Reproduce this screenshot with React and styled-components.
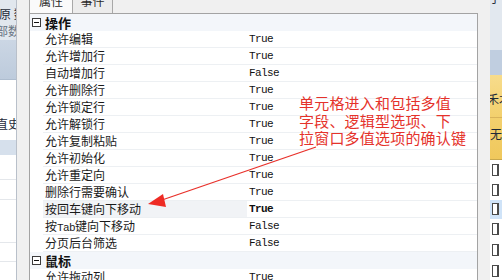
import React from "react";
import styled, { createGlobalStyle } from "styled-components";

const GlobalStyle = createGlobalStyle`
  html, body {
    margin: 0;
    padding: 0;
  }
  body {
    width: 502px;
    height: 280px;
    overflow: hidden;
    background: #f0f0f0;
    font-family: "Noto Sans CJK SC", sans-serif;
  }
`;

const Screen = styled.div`
  display: flex;
  width: 502px;
  height: 280px;
  overflow: hidden;
`;

/* ---------- application behind the dialog ---------- */

const BackApp = styled.div`
  width: ${p => p.$w}px;
  flex: none;
  display: flex;
  flex-direction: column;
  overflow: hidden;
  background: #fff;
`;

const Band = styled.div`
  flex: none;
  height: ${p => p.$h}px;
  background: ${p => p.$bg || "#fff"};
  border-bottom: 1px solid ${p => p.$line || "transparent"};
  box-sizing: border-box;
  display: flex;
  flex-direction: column;
  justify-content: ${p => p.$justify || "flex-start"};
  overflow: hidden;
`;

const BackText = styled.div`
  flex: none;
  white-space: nowrap;
  font-size: 12px;
  line-height: 17px;
  height: 17px;
  color: ${p => p.$color || "#1e2a38"};
  margin-left: ${p => p.$shift || 0}px;
`;

const BackRow = styled.div`
  flex: none;
  height: ${p => p.$h || 21}px;
  display: flex;
  align-items: center;
  padding-left: 2px;
  background: ${p => (p.$active ? "#cfe3f8" : "transparent")};
  border-bottom: 1px solid ${p => p.$line || "transparent"};
  box-sizing: border-box;
`;

const Check = styled.span`
  width: 4px;
  height: 10px;
  border: 1px solid #4a4a4a;
  border-right-width: 2px;
  background: #fff;
`;

/* ---------- the property dialog ---------- */

const Dialog = styled.div`
  flex: 1;
  display: flex;
  flex-direction: column;
  background: #f0f0f0;
  border-left: 1px solid #b9c0ca;
  padding: 0 12px 0 12px;
  overflow: hidden;
`;

const TabStrip = styled.div`
  height: 13px;
  flex: none;
  display: flex;
  align-items: flex-end;
  overflow: hidden;
`;

const Tab = styled.div`
  flex: none;
  width: ${p => p.$w}px;
  height: 27px;
  box-sizing: border-box;
  display: flex;
  align-items: center;
  justify-content: center;
  font-size: 12px;
  color: #2a2a2a;
  background: ${p => (p.$active ? "#fafafa" : "#ececec")};
  border: 1px solid #a8a8a8;
  border-left-width: ${p => (p.$active ? 1 : 0)}px;
  border-bottom: none;
`;

const Grid = styled.div`
  position: relative;
  flex: 1;
  background: #fff;
  border: 1px solid #a3a3a3;
  border-bottom: none;
  overflow: hidden;
`;

const Category = styled.div`
  height: 17px;
  line-height: 17px;
  display: flex;
  align-items: center;
  background: #f3f6fa;
  font-size: 13px;
  font-weight: bold;
  color: #111;
  overflow: hidden;
`;

const Toggle = styled.span`
  position: relative;
  flex: none;
  width: 9px;
  height: 9px;
  margin: 0 4px 0 2px;
  box-sizing: border-box;
  border: 1px solid #3c3c3c;
  background: #fff;

  &::after {
    content: "";
    position: absolute;
    left: 1px;
    right: 1px;
    top: 3px;
    height: 1px;
    background: #111;
  }
`;

const Row = styled.div`
  height: 17px;
  display: flex;
  padding-left: 13px;
`;

const Cell = styled.div`
  box-sizing: border-box;
  height: 17px;
  line-height: 16px;
  border-bottom: 1px solid #edf0f3;
  white-space: nowrap;
  overflow: hidden;
`;

const Label = styled(Cell)`
  width: 204px;
  padding-left: 2px;
  font-size: 12px;
  color: #1a1a1a;
  background: ${p => (p.$selected ? "#f1f3f6" : "transparent")};
`;

const Value = styled(Cell)`
  flex: 1;
  padding-left: 2px;
  font-family: "Liberation Mono", monospace;
  font-size: 11px;
  letter-spacing: -0.6px;
  color: #111;
  font-weight: ${p => (p.$bold ? "bold" : "normal")};
`;

const Latin = styled.span`
  font-family: "Liberation Mono", monospace;
  font-size: 11px;
  letter-spacing: -0.6px;
`;

/* ---------- annotation overlay ---------- */

const Note = styled.div`
  position: absolute;
  left: 269px;
  top: 80px;
  font-size: 15px;
  line-height: 17.5px;
  letter-spacing: 0.2px;
  color: #e5322b;
  white-space: nowrap;
`;

const Arrow = styled.svg`
  position: absolute;
  left: 0;
  top: 0;
  pointer-events: none;
`;

const props1 = [
  ["允许编辑", "True"],
  ["允许增加行", "True"],
  ["自动增加行", "False"],
  ["允许删除行", "True"],
  ["允许锁定行", "True"],
  ["允许解锁行", "True"],
  ["允许复制粘贴", "True"],
  ["允许初始化", "True"],
  ["允许重定向", "True"],
  ["删除行需要确认", "True"],
  ["按回车键向下移动", "True", true],
  [<>按<Latin>Tab</Latin>键向下移动</>, "False"],
  ["分页后台筛选", "False"],
];

const App = () => {
  return (
    <Screen>
      <GlobalStyle />

      <BackApp $w={16}>
        <Band $h={40} $bg="#e1e7ee" $justify="flex-end">
          <BackText $shift={-1}>原 数</BackText>
          <BackText $shift={-4} $color="#6b7684">部数</BackText>
        </Band>
        <Band $h={40} $bg="linear-gradient(#cbd6e4, #bdcbdc)" $line="#aebdcf" />
        <Band $h={60} $justify="flex-end">
          <BackText $shift={-4}>直史</BackText>
          <div style={{ height: 7 }} />
        </Band>
        <Band $h={15} $bg="#d6e0ec" />
        <BackRow $h={25} $line="#e4e7eb" />
        <BackRow $h={20} $line="#e4e7eb" />
        <BackRow $h={43} $line="#e4e7eb" />
        <BackRow $h={19} $line="#e4e7eb" />
      </BackApp>

      <Dialog>
        <TabStrip>
          <Tab $w={44} $active>属性</Tab>
          <Tab $w={40}>事件</Tab>
        </TabStrip>

        <Grid>
          <Category>
            <Toggle />
            操作
          </Category>
          {props1.map(([label, value, sel], i) => (
            <Row key={i}>
              <Label $selected={sel}>{label}</Label>
              <Value $bold={sel}>{value}</Value>
            </Row>
          ))}
          <Category>
            <Toggle />
            鼠标
          </Category>
          <Row>
            <Label>允许拖动列</Label>
            <Value>True</Value>
          </Row>

          <Note>
            单元格进入和包括多值<br />
            字段、逻辑型选项、下<br />
            拉窗口多值选项的确认键
          </Note>
          <Arrow width="447" height="266" viewBox="0 0 447 266">
            <line x1="286" y1="133" x2="132" y2="186" stroke="#e8302a" strokeWidth="1.3" />
            <polygon points="118,190 133,180 136,193" fill="#ee2b24" />
          </Arrow>
        </Grid>
      </Dialog>

      <BackApp $w={12}>
        <Band $h={50} $bg="#e2e8ef">
          <BackText $shift={-1} style={{ marginTop: -11 }}>于</BackText>
        </Band>
        <Band $h={25} $bg="#c0cee0" />
        <Band $h={43} $bg="linear-gradient(#f7dc8c, #f3d06d)" $line="#d9b35a" $justify="flex-end">
          <BackText $shift={-3}>禾术</BackText>
          <div style={{ height: 10 }} />
        </Band>
        <Band $h={42} $bg="linear-gradient(#f3d06d, #f0c85c)" $line="#c8a84e">
          <BackText style={{ marginTop: 7 }}>无</BackText>
        </Band>
        <BackRow $h={20}><Check /></BackRow>
        <BackRow $h={20}><Check /></BackRow>
        <BackRow $h={19} $active><Check /></BackRow>
        <BackRow $h={21}><Check /></BackRow>
        <BackRow $h={21}><Check /></BackRow>
        <BackRow $h={21}><Check /></BackRow>
      </BackApp>
    </Screen>
  );
};

export default App;
